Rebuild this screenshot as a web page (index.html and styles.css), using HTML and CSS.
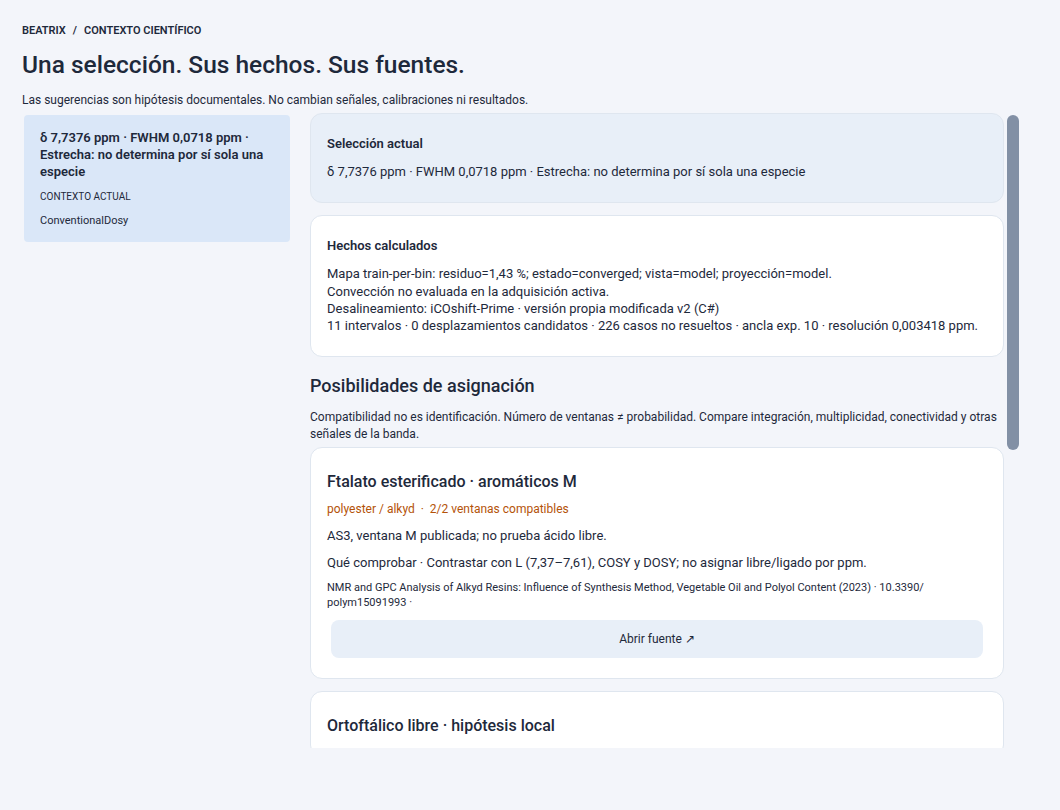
FILE: index.html
```html
<!DOCTYPE html>
<html lang="es">
<head>
<meta charset="utf-8">
<title>Beatrix · Contexto científico</title>
<link rel="stylesheet" href="styles.css">
</head>
<body>
<div class="page">
  <header class="header">
    <nav class="crumbs"><span>Beatrix</span><span class="sep">/</span><span>Contexto científico</span></nav>
    <h1 class="title">Una selección. Sus hechos. Sus fuentes.</h1>
    <p class="lede">Las sugerencias son hipótesis documentales. No cambian señales, calibraciones ni resultados.</p>
  </header>
  <div class="layout">
    <aside class="side">
      <div class="side-card">
        <div class="side-title">δ 7,7376 ppm · FWHM 0,0718 ppm · Estrecha: no determina por sí sola una especie</div>
        <div class="side-label">CONTEXTO ACTUAL</div>
        <div class="side-value">ConventionalDosy</div>
      </div>
    </aside>
    <div class="main-wrap">
      <main class="main">
        <section class="card card-soft">
          <h3 class="card-label">Selección actual</h3>
          <p class="card-text">δ 7,7376 ppm · FWHM 0,0718 ppm · Estrecha: no determina por sí sola una especie</p>
        </section>
        <section class="card">
          <h3 class="card-label">Hechos calculados</h3>
          <p class="card-text">Mapa train-per-bin: residuo=1,43 %; estado=converged; vista=model; proyección=model.<br>Convección no evaluada en la adquisición activa.<br>Desalineamiento: iCOshift-Prime · versión propia modificada v2 (C#)<br>11 intervalos · 0 desplazamientos candidatos · 226 casos no resueltos · ancla exp. 10 · resolución 0,003418 ppm.</p>
        </section>
        <h2 class="section-title">Posibilidades de asignación</h2>
        <p class="section-note">Compatibilidad no es identificación. Número de ventanas ≠ probabilidad. Compare integración, multiplicidad, conectividad y otras señales de la banda.</p>
        <article class="card hyp">
          <h3 class="hyp-title">Ftalato esterificado · aromáticos M</h3>
          <div class="hyp-meta">polyester / alkyd  ·  2/2 ventanas compatibles</div>
          <p class="hyp-text">AS3, ventana M publicada; no prueba ácido libre.</p>
          <p class="hyp-text">Qué comprobar · Contrastar con L (7,37–7,61), COSY y DOSY; no asignar libre/ligado por ppm.</p>
          <p class="hyp-cite">NMR and GPC Analysis of Alkyd Resins: Influence of Synthesis Method, Vegetable Oil and Polyol Content (2023) · 10.3390/ polym15091993 ·</p>
          <button class="open-btn" type="button">Abrir fuente ↗</button>
        </article>
        <article class="card hyp">
          <h3 class="hyp-title">Ortoftálico libre · hipótesis local</h3>
        </article>
      </main>
      <div class="thumb" aria-hidden="true"></div>
    </div>
  </div>
</div>
</body>
</html>
```
FILE: styles.css
```css
* { box-sizing: border-box; }
html, body { margin: 0; padding: 0; }
body {
  background: #f3f5fa;
  color: #1e293b;
  font-family: "Roboto", "Open Sans", sans-serif;
  overflow: hidden;
}
.page { padding: 23px 22px 0 22px; }
.header { display: flex; flex-direction: column; }
.crumbs {
  font-size: 11px; line-height: 15px; font-weight: 600;
  text-transform: uppercase; color: #1e293b;
  display: flex; gap: 7px;
}
.title {
  margin: 11px 0 0; font-size: 24.5px; line-height: 32px; font-weight: 500; color: #1e293b;
}
.lede { margin: 11px 0 0; font-size: 12px; line-height: 16px; }
.layout {
  margin-top: 5px;
  display: grid;
  grid-template-columns: 266px 709px;
  column-gap: 20px;
  padding-left: 2px;
}
.side { padding-top: 2px; }
.side-card {
  background: #dae7f8;
  border-radius: 4px;
  padding: 14px 16px;
  display: flex; flex-direction: column; gap: 10px;
}
.side-title { font-size: 13px; line-height: 17px; font-weight: 600; }
.side-label { font-size: 10px; line-height: 13px; }
.side-value { font-size: 11px; line-height: 15px; }
.main-wrap {
  position: relative;
  height: calc(100vh - 175px);
}
.main {
  height: 100%;
  overflow: hidden;
  padding-right: 15px;
  display: flex; flex-direction: column; gap: 12px;
}
.thumb {
  position: absolute;
  top: 2px; right: 0;
  width: 12px; height: 335px;
  border-radius: 6px;
  background: #8290a5;
}
.card {
  flex: none;
  background: #ffffff;
  border: 1px solid #dfe6ef;
  border-radius: 12px;
  padding: 21px 16px 22px;
}
.card-soft { background: #e8eff8; }
.card-label { margin: 0 0 11px; font-size: 13px; line-height: 17px; font-weight: 600; }
.card-text { margin: 0; font-size: 13px; line-height: 17.3px; }
.section-title { margin: 5px 0 0; font-size: 18px; line-height: 24px; font-weight: 500; flex: none; }
.section-note { margin: -1px 0 -8px; font-size: 12px; line-height: 17px; flex: none; }
.hyp { display: flex; flex-direction: column; gap: 10px; padding: 23px 16px 20px; }
.hyp-title { margin: 0; font-size: 16px; line-height: 21px; font-weight: 500; }
.hyp-meta { font-size: 12px; line-height: 16px; color: #b45309; white-space: pre; margin-top: -1px; }
.hyp-text { margin: 0; font-size: 13px; line-height: 17px; }
.hyp-cite { margin: -1px 0 0; font-size: 11px; line-height: 15px; }
.open-btn {
  margin: 0 4px;
  height: 38px;
  border: none; border-radius: 8px;
  background: #e8eff8; color: #1e293b;
  font-family: inherit; font-size: 12px;
}
```
